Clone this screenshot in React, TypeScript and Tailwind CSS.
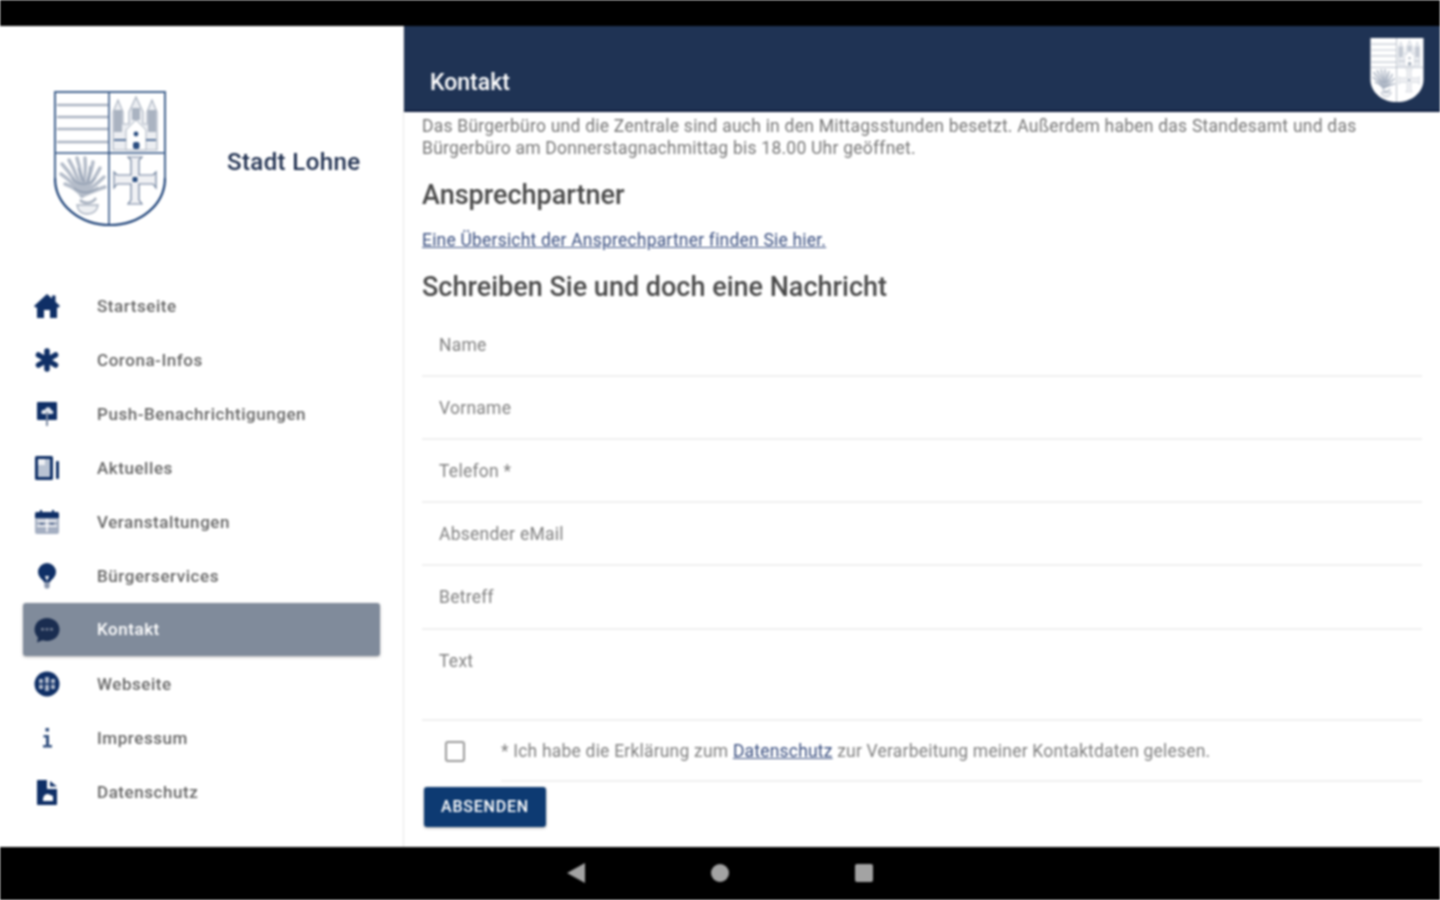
import React from 'react';

function Crest({ filled = false, className }: { filled?: boolean; className?: string }) {
  const line = filled ? '#a3adbb' : '#2a4d80';
  const soft = filled ? '#c3c9d3' : '#aab3c1';
  const tips = [
    [8, 74],
    [15, 70],
    [23, 68],
    [31, 68],
    [39, 72],
    [46, 78],
    [50, 87],
    [51, 97],
    [7, 84],
    [11, 94],
  ];
  return (
    <svg viewBox="0 0 112 137" className={className} fill="none">
      <path d="M1 2H111V88C111 115 86 135 56 135C26 135 1 115 1 88Z" fill={filled ? '#ffffff' : 'none'} />
      {/* stripes */}
      <path d="M3 15H54M3 27H54M3 39H54M3 52H54" stroke={soft} strokeWidth="2.5" />
      {/* church */}
      <path d="M59 60V22L64 10L69 22V34H75V22L82 7L89 22V34H93V22L98 10L103 22V60Z" fill="#eceef2" stroke={soft} strokeWidth="1.2" />
      <path d="M60 20H68V42H60ZM94 20H102V42H94ZM78 18H86V30H78Z" fill={soft} />
      <path d="M72 60V40L82 30L92 40V60Z" fill="#ffffff" stroke={soft} strokeWidth="1" />
      <path d="M60 50H72M92 50H102" stroke={line} strokeWidth="1.5" />
      <circle cx="82" cy="44" r="2.4" fill={line} />
      <rect x="79" y="52" width="6.500" height="7" rx="2" fill={line} />
      {/* plant in pot */}
      {tips.map(([x, y]) => (
        <path key={`${x}-${y}`} d={`M28 106Q${(x + 28) / 2 + 3} ${(y + 106) / 2 - 2} ${x} ${y}`} stroke="#b4bcc9" strokeWidth="3.500" strokeLinecap="round" />
      ))}
      <path d="M18 88C24 96 34 96 42 88M20 98C28 104 36 104 44 97M24 78L30 92M36 76L34 92" stroke="#7d8ca3" strokeWidth="1" />
      <path d="M23 115H44C43 122 38 124 33 124C28 124 24 122 23 115Z" fill="#eef0f3" stroke="#aab3c1" strokeWidth="1.500" />
      <path d="M26 110C30 114 38 114 42 108" stroke="#aab3c1" strokeWidth="2.500" />
      {/* cross */}
      <path d="M77 70L74 67H88L85 70V85H99L102 82V98L99 94H85V110L88 114H74L77 110V94H63L60 98V82L63 85H77Z" fill="#f0f1f4" stroke={filled ? soft : '#6c7f9b'} strokeWidth="1.200" />
      <rect x="78.500" y="87" width="5" height="5" rx="1" fill={line} />
      {/* divisions and border */}
      <path d="M55 2V135M1 63H111" stroke={line} strokeWidth="1.500" />
      {!filled && (
        <>
          <path d="M1 88V2H111V88" stroke="#44648f" strokeWidth="2" />
          <path d="M1 88C1 115 26 135 56 135C86 135 111 115 111 88" stroke="#1d4278" strokeWidth="2.200" />
        </>
      )}
    </svg>
  );
}

function HomeIcon() {
  return (
    <svg viewBox="0 0 26 24" className="h-[24px] w-[26px]" fill="#0f2f66">
      <path d="M13 0L18 4.500V1.500H21.500V7.700L26 12L24.500 13.500H23V24H16V16H10V24H3V13.500H1.500L0 12Z" />
    </svg>
  );
}

function AsteriskIcon() {
  return (
    <svg viewBox="0 0 24 24" className="h-[24px] w-[24px]" stroke="#0f2f66" strokeWidth="5.500" strokeLinecap="round">
      <path d="M12 3V21M3.500 7L20.500 17M20.500 7L3.500 17" />
    </svg>
  );
}

function PushIcon() {
  return (
    <svg viewBox="0 0 20 24" className="h-[24px] w-[20px]">
      <rect x="0" y="0" width="20" height="18" rx="1" fill="#0f2f66" />
      <path d="M5 12C3 9 6 7 8 8C9 4 14 5 14 8C17 8 17 12 15 12Z" fill="#dfe4ec" />
      <rect x="9" y="10" width="2" height="14" fill="#7d8ba3" />
    </svg>
  );
}

function NewsIcon() {
  return (
    <svg viewBox="0 0 24 24" className="h-[24px] w-[24px]">
      <rect x="0" y="0" width="18" height="24" rx="1.500" fill="#0f2f66" />
      <rect x="3" y="3" width="12" height="18" fill="#b9c3d3" />
      <rect x="3" y="3" width="7" height="6" fill="#eef0f4" />
      <rect x="21" y="5" width="3" height="18" rx="1" fill="#0f2f66" />
    </svg>
  );
}

function CalendarIcon() {
  return (
    <svg viewBox="0 0 24 24" className="h-[24px] w-[24px]">
      <rect x="0" y="2" width="24" height="22" rx="2" fill="#a5afc2" />
      <path d="M0 4C0 2.900.9 2 2 2H22C23.100 2 24 2.900 24 4V8H0Z" fill="#0f2f66" />
      <rect x="5" y="0" width="2" height="4" fill="#0f2f66" />
      <rect x="17" y="0" width="2" height="4" fill="#0f2f66" />
      <path d="M2 11H22M2 16H22M12 9V22" stroke="#ffffff" strokeWidth="1.500" />
      <rect x="5" y="13" width="4" height="1.500" fill="#4a5f85" />
      <rect x="15" y="13" width="4" height="1.500" fill="#4a5f85" />
    </svg>
  );
}

function BulbIcon() {
  return (
    <svg viewBox="0 0 20 26" className="h-[26px] w-[20px]">
      <path d="M7 16H13L12.500 24.500C11.500 26 8.500 26 7.500 24.500Z" fill="#8a96ad" />
      <circle cx="10" cy="9" r="9" fill="#0f2f66" />
      <path d="M4 15L7 19H13L16 15Z" fill="#0f2f66" />
      <path d="M8 13L10 18L12 13Z" fill="#ffffff" />
    </svg>
  );
}

function ChatIcon() {
  return (
    <svg viewBox="0 0 26 26" className="h-[26px] w-[26px]">
      <path d="M13 1C20 1 25.500 6 25.500 12.500C25.500 19 20 24 13 24C11.500 24 10 23.800 8.500 23.300L3 25.500L4 20.500C1.800 18.300.5 15.500.5 12.500C.5 6 6 1 13 1Z" fill="#1a2d50" />
      <rect x="7" y="11" width="3" height="2.500" fill="#6f7b90" />
      <rect x="11.500" y="11" width="3" height="2.500" fill="#6f7b90" />
      <rect x="16" y="11" width="3" height="2.500" fill="#6f7b90" />
    </svg>
  );
}

function GlobeIcon() {
  return (
    <svg viewBox="0 0 26 26" className="h-[26px] w-[26px]">
      <circle cx="13" cy="13" r="12.500" fill="#0f2f66" />
      <path d="M5 8H9V18H5ZM11 6H15V20H11ZM17 8H21V18H17Z" fill="#aab5c8" />
      <path d="M4 13H22" stroke="#0f2f66" strokeWidth="1.500" />
    </svg>
  );
}

function InfoIcon() {
  return (
    <svg viewBox="0 0 11 20" className="h-[20px] w-[11px]" fill="#33507f">
      <rect x="3.500" y="0" width="3.500" height="3.500" />
      <path d="M1.500 7H7V17H10V19.500H1V17H4V9.500H1.500Z" />
    </svg>
  );
}

function FileIcon() {
  return (
    <svg viewBox="0 0 20 25" className="h-[25px] w-[20px]">
      <path d="M0 1C0 .4.4 0 1 0H10V9H20V24C20 24.600 19.600 25 19 25H1C.4 25 0 24.600 0 24Z" fill="#0f2f66" />
      <path d="M13 1L20 6.500H13Z" fill="#0f2f66" />
      <path d="M6 20C6 16 8 14 11 14L16 16V21H6Z" fill="#ffffff" />
    </svg>
  );
}

const navItems = [
  { label: 'Startseite', icon: <HomeIcon /> },
  { label: 'Corona-Infos', icon: <AsteriskIcon /> },
  { label: 'Push-Benachrichtigungen', icon: <PushIcon /> },
  { label: 'Aktuelles', icon: <NewsIcon /> },
  { label: 'Veranstaltungen', icon: <CalendarIcon /> },
  { label: 'Bürgerservices', icon: <BulbIcon /> },
  { label: 'Kontakt', active: true, icon: <ChatIcon /> },
  { label: 'Webseite', icon: <GlobeIcon /> },
  { label: 'Impressum', icon: <InfoIcon /> },
  { label: 'Datenschutz', icon: <FileIcon /> },
];

const fields = ['Name', 'Vorname', 'Telefon *', 'Absender eMail'];

export default function App() {
  return (
    <div className="flex h-screen flex-col overflow-hidden bg-white font-['Roboto',sans-serif] blur-[1px]">
      <div className="h-[26px] shrink-0 bg-black" />

      <div className="flex h-[821px] shrink-0">
        <aside className="w-[404px] shrink-0 border-r border-[#e8e8e8] bg-white">
          <div className="flex h-[253px] items-start pl-[54px] pt-[64px]">
            <Crest className="h-[137px] w-[112px] shrink-0" />
            <div className="ml-[61px] mt-[56px] text-[24px] font-medium leading-[32px] tracking-[0.4px] text-[#1f2f4f]">
              Stadt Lohne
            </div>
          </div>
          <nav className="px-[23px]">
            {navItems.map((item) => (
              <div
                key={item.label}
                className={
                  item.active
                    ? 'mb-[1px] flex h-[53px] items-center rounded-[3px] bg-[#808b9b] shadow-[0_1px_3px_rgba(0,0,0,0.3)]'
                    : 'flex h-[54px] items-center'
                }
              >
                <div className="flex w-[48px] justify-center">{item.icon}</div>
                <span
                  className={
                    item.active
                      ? 'ml-[26px] pt-[1px] text-[17px] font-medium tracking-[0.55px] text-white'
                      : 'ml-[26px] pt-[1px] text-[17px] font-medium tracking-[0.55px] text-[#666666]'
                  }
                >
                  {item.label}
                </span>
              </div>
            ))}
          </nav>
        </aside>

        <main className="min-w-0 flex-1">
          <header className="flex h-[86px] items-center justify-between border-b-2 border-[#101f3f] bg-[#1f3354] pl-[26px] pr-[16px]">
            <h1 className="mt-[30px] text-[23px] font-medium text-white">Kontakt</h1>
            <Crest filled className="mt-[4px] h-[68px] w-[54px]" />
          </header>

          <div className="px-[18px]">
            <p className="w-[960px] pt-[3px] text-[17.5px] leading-[22px] tracking-[0.23px] text-[#777777]">
              Das Bürgerbüro und die Zentrale sind auch in den Mittagsstunden besetzt. Außerdem haben das Standesamt und das
              Bürgerbüro am Donnerstagnachmittag bis 18.00 Uhr geöffnet.
            </p>
            <h2 className="mt-[18px] text-[27px] font-medium leading-[36px] text-[#4a4a4a]">Ansprechpartner</h2>
            <a className="mt-[16px] block text-[17.5px] leading-[22px] tracking-[0.2px] text-[#3a4f80] underline">
              Eine Übersicht der Ansprechpartner finden Sie hier.
            </a>
            <h2 className="mt-[18px] text-[27px] font-medium leading-[36px] text-[#4a4a4a]">
              Schreiben Sie und doch eine Nachricht
            </h2>

            <div className="mt-[9px]">
              {fields.map((field) => (
                <div
                  key={field}
                  className="h-[63px] border-b-2 border-[#f0f0f0] pl-[17px] pt-[20px] text-[17.5px] leading-[22px] tracking-[0.25px] text-[#808080]"
                >
                  {field}
                </div>
              ))}
              <div className="h-[64px] border-b-2 border-[#f0f0f0] pl-[17px] pt-[20px] text-[17.5px] leading-[22px] tracking-[0.25px] text-[#808080]">
                Betreff
              </div>
              <div className="h-[91px] border-b-2 border-[#f0f0f0] pl-[17px] pt-[20px] text-[17.5px] leading-[22px] tracking-[0.25px] text-[#808080]">
                Text
              </div>
            </div>

            <div className="flex h-[61px] items-center">
              <div className="ml-[23px] h-[21px] w-[20px] rounded-[3px] border-2 border-[#9a9a9a]" />
              <div className="ml-[36px] flex h-full flex-1 items-center border-b-2 border-[#f0f0f0] pt-[1px] text-[17.5px] tracking-[0.2px] text-[#808080]">
                <span>
                  * Ich habe die Erklärung zum <a className="text-[#3a4f80] underline">Datenschutz</a> zur Verarbeitung
                  meiner Kontaktdaten gelesen.
                </span>
              </div>
            </div>

            <button className="ml-[2px] mt-[5px] h-[40px] w-[122px] rounded-[3px] bg-[#0d3a72] text-[16px] font-medium tracking-[0.8px] text-white shadow-[0_1px_3px_rgba(0,0,0,0.35)]">
              ABSENDEN
            </button>
          </div>
        </main>
      </div>

      <div className="flex flex-1 items-center justify-center gap-[126px] bg-black pb-[1px]">
        <svg viewBox="0 0 18 20" className="h-[20px] w-[18px]" fill="#a3a3a3">
          <path d="M18 0V20L0 10Z" />
        </svg>
        <div className="h-[18px] w-[18px] rounded-full bg-[#a3a3a3]" />
        <div className="h-[18px] w-[18px] rounded-[2px] bg-[#a3a3a3]" />
      </div>
    </div>
  );
}
